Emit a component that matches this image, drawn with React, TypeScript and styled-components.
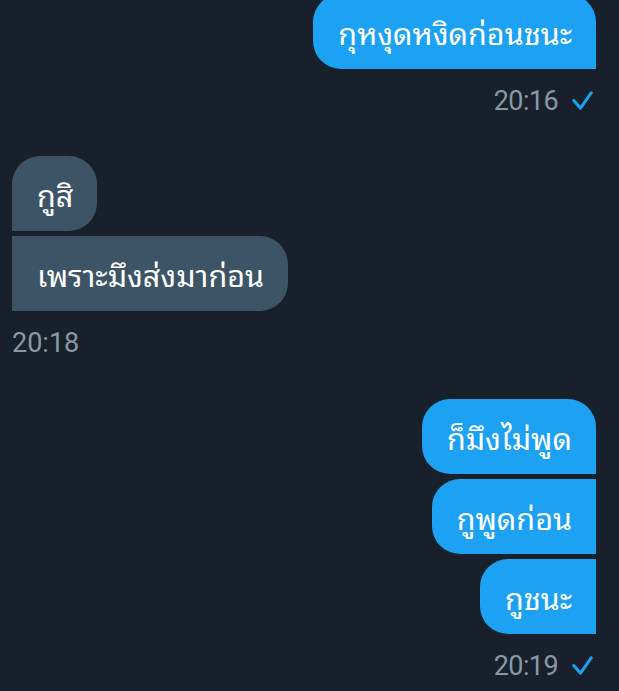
import styled, { createGlobalStyle } from 'styled-components';

const GlobalStyle = createGlobalStyle`
  html, body {
    margin: 0;
    padding: 0;
    background: #17202b;
  }
  body {
    font-family: Roboto, "Noto Sans Thai Looped", "Noto Sans Thai", sans-serif;
  }
`;

const Page = styled.div`
  width: 619px;
  height: 691px;
  overflow: hidden;
  background: #17202b;
  display: flex;
  flex-direction: column;
  padding: 0 23px 0 12px;
  box-sizing: border-box;
`;

const Group = styled.div<{ mine: boolean; offset: number }>`
  display: flex;
  flex-direction: column;
  align-items: ${({ mine }) => (mine ? 'flex-end' : 'flex-start')};
  gap: 5px;
  margin-top: ${({ offset }) => offset}px;
`;

const Bubble = styled.div<{ mine: boolean; pos: 'single' | 'first' | 'middle' | 'last' }>`
  box-sizing: border-box;
  height: 75px;
  display: flex;
  align-items: center;
  padding: 0 24px 0 25px;
  font-family: "Noto Sans Thai Looped", "Noto Sans Thai", sans-serif;
  font-size: 30.5px;
  line-height: 40px;
  color: #ffffff;
  white-space: nowrap;
  background: ${({ mine }) => (mine ? '#1da1f2' : '#3d5466')};
  border-radius: ${({ mine, pos }) => {
    const r = '28px';
    const top = pos === 'single' || pos === 'first' ? r : '0';
    if (mine) return `${r} ${top} 0 ${r}`;
    return `${top} ${r} ${r} 0`;
  }};
`;

const Meta = styled.div<{ mine: boolean }>`
  display: flex;
  align-items: center;
  justify-content: ${({ mine }) => (mine ? 'flex-end' : 'flex-start')};
  gap: 14px;
  margin-top: 12px;
  font-family: Roboto, sans-serif;
  font-size: 27px;
  line-height: 30px;
  color: #8899a6;
  padding-right: ${({ mine }) => (mine ? '3px' : '0')};
  letter-spacing: ${({ mine }) => (mine ? '-0.6px' : '0')};
`;

const Check = () => (
  <svg width="21" height="20" viewBox="0 0 21 20" fill="none">
    <path d="M1.8 9.5 L8.5 17.2 L19.2 1.8" stroke="#1da1f2" strokeWidth="3" strokeLinecap="round" strokeLinejoin="round" />
  </svg>
);

type Msg = { text: string };
type Block = { mine: boolean; time: string; offset: number; msgs: Msg[] };

const blocks: Block[] = [
  { mine: true, time: '20:16', offset: -6, msgs: [{ text: 'กุหงุดหงิดก่อนชนะ' }] },
  { mine: false, time: '20:18', offset: 40, msgs: [{ text: 'กูสิ' }, { text: 'เพราะมึงส่งมาก่อน' }] },
  { mine: true, time: '20:19', offset: 41, msgs: [{ text: 'ก็มึงไม่พูด' }, { text: 'กูพูดก่อน' }, { text: 'กูชนะ' }] },
];

const posOf = (i: number, n: number): 'single' | 'first' | 'middle' | 'last' =>
  n === 1 ? 'single' : i === 0 ? 'first' : i === n - 1 ? 'last' : 'middle';

export default function App() {
  return (
    <>
      <GlobalStyle />
      <Page>
        {blocks.map((b) => (
          <Group key={b.time} mine={b.mine} offset={b.offset}>
            {b.msgs.map((m, i) => (
              <Bubble key={m.text} mine={b.mine} pos={posOf(i, b.msgs.length)}>
                {m.text}
              </Bubble>
            ))}
            <Meta mine={b.mine}>
              <span>{b.time}</span>
              {b.mine && <Check />}
            </Meta>
          </Group>
        ))}
      </Page>
    </>
  );
}
